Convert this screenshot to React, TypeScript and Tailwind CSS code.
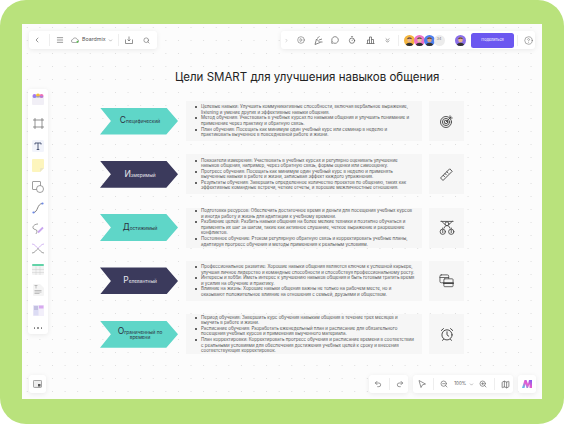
import React from "react";
import { ChevronLeft, ChevronRight, ChevronDown, ChevronsDown, Menu, Search, PlayCircle, MessageCircle, Timer, Undo2, Redo2, ZoomIn, ZoomOut, Map, HelpCircle } from "lucide-react";

const rows = [
  { first: "С", rest: "пецифический", dark: false, icon: "target", items: [
    "Целевые навыки: Улучшить коммуникативные способности, включая вербальное выражение, listening и умение других и эффективные навыки общения.",
    "Метод обучения: Участвовать в учебных курсах по навыкам общения и улучшить понимание и применение через практику и обратную связь.",
    "План обучения: Посещать как минимум один учебный курс или семинар в неделю и практиковать выученное в повседневной работе и жизни." ] },
  { first: "И", rest: "змеримый", dark: true, icon: "ruler", items: [
    "Показатели измерения: Участвовать в учебных курсах и регулярно оценивать улучшение навыков общения, например, через обратную связь, формы оценки или самооценку.",
    "Прогресс обучения: Посещать как минимум один учебный курс в неделю и применять выученные навыки в работе и жизни, записывая эффект каждого упражнения.",
    "Результаты обучения: Завершить определенное количество проектов по общению, таких как эффективные командные встречи, четкие отчеты, и хорошие межличностные отношения." ] },
  { first: "Д", rest: "остижимый", dark: false, icon: "team", items: [
    "Подготовка ресурсов: Обеспечить достаточное время и деньги для посещения учебных курсов и иногда работу и жизнь для адаптации к учебному времени.",
    "Разбиение целей: Разбить навыки общения на более мелкие техники и поэтапно обучаться и применять их шаг за шагом, такие как активное слушание, четкое выражение и разрешение конфликтов.",
    "Постоянное обучение: Ртоком регулярную обратную связь и корректировать учебные планы, адаптируя прогресс обучения и методы применения к реальным условиям." ] },
  { first: "Р", rest: "елевантный", dark: true, icon: "cards", items: [
    "Профессиональное развитие: Хорошие навыки общения являются ключом к успешной карьере, улучшая личное лидерство и командные способности и способствуя профессиональному росту.",
    "Интересы и хобби: Иметь интерес к улучшению навыков общения и быть готовым тратить время и усилия на обучение и практику.",
    "Влияние на жизнь: Хорошие навыки общения важны не только на рабочем месте, но и оказывают положительное влияние на отношения с семьей, друзьями и обществом." ] },
  { first: "О", rest: "граниченный по времени", dark: false, icon: "clock", items: [
    "Период обучения: Завершить курс обучения навыкам общения в течение трех месяцев и выучить в работе и жизни.",
    "Расписание обучения: Разработать еженедельный план и расписание для обязательного посещения учебных курсов и применения выученного материала.",
    "План корректировки: Корректировать прогресс обучения и расписание времени в соответствии с реальными условиями для обеспечения достижения учебных целей к сроку и внесения соответствующих корректировок." ] },
];

function RowIcon({ kind }: { kind: string }) {
  const c = { fill: "none", stroke: "#444", strokeWidth: 0.9, strokeLinecap: "round" as const, strokeLinejoin: "round" as const };
  if (kind === "target") return (
    <svg width="13" height="13" viewBox="0 0 13 13" {...c}>
      <circle cx="6" cy="7" r="5.500" /><circle cx="6" cy="7" r="3.600" /><circle cx="6" cy="7" r="1.800" /><path d="M6 7 11 2M10 .8V3h2.200" />
    </svg>);
  if (kind === "ruler") return (
    <svg width="13" height="13" viewBox="0 0 13 13" {...c}>
      <path d="M.8 9.700 9.700.8 12.200 3.300 3.300 12.200Z" /><path d="M3.200 7.300 4.500 8.600M5 5.500 6.300 6.800M6.800 3.700 8.100 5" />
    </svg>);
  if (kind === "team") return (
    <svg width="16" height="16" viewBox="0 0 17 17" {...c}>
      <circle cx="8.500" cy="4" r="2" /><path d="M2 1.500h13M3 1.500l3.500 3.500M14 1.500l-3.500 3.500M5.500 8.500c.5-2 1.500-2.500 3-2.500s2.500.5 3 2.500" />
      <circle cx="4" cy="12.500" r="2.800" /><circle cx="13" cy="12.500" r="2.800" /><path d="M4 8.500v1.200M13 8.500v1.200M4 11v2.500M13 11v2.500" />
    </svg>);
  if (kind === "cards") return (
    <svg width="15" height="14" viewBox="0 0 17 16" {...c}>
      <rect x="1" y="1" width="10" height="9" rx="1.500" /><path d="M1 4h10" /><rect x="5.500" y="5.500" width="10.500" height="9" rx="1" fill="#f6f6f6" /><path d="M5.500 10.500h10.500" strokeWidth={2} />
    </svg>);
  return (
    <svg width="14" height="14" viewBox="0 0 16 16" {...c} strokeWidth={1.100}>
      <circle cx="8" cy="9" r="5.800" /><path d="M8 5.500V9l2 1.500M1.500 4 4 1.800M14.500 4 12 1.800M4 14l-1 1.300M12 14l1 1.300" />
    </svg>);
}

function Avatar({ bg, skin = "#e8b48f", hair = "#3a2a22" }: { bg: string; skin?: string; hair?: string }) {
  return (
    <svg width="11" height="11" viewBox="0 0 11 11" className="rounded-full shrink-0">
      <rect width="11" height="11" fill={bg} />
      <ellipse cx="5.500" cy="4.800" rx="2.200" ry="2.700" fill={skin} />
      <path d="M3.200 4.200C3.200 2 7.800 2 7.800 4.200 6.500 3.200 4.500 3.200 3.200 4.200Z" fill={hair} />
      <path d="M1.500 11c.4-2.500 2-3.300 4-3.300s3.600.8 4 3.300Z" fill="#333" />
    </svg>
  );
}

function Divider({ h = "h-3" }: { h?: string }) {
  return <div className={`w-px ${h} bg-[#eeeeee] shrink-0`} />;
}

function LeftTools() {
  return (
    <div className="absolute left-[6px] top-[65px] w-[20px] h-[245px] bg-white rounded-[3px] shadow-[0_1px_5px_rgba(0,0,0,0.08)] flex flex-col items-center">
      <svg width="12" height="12" viewBox="0 0 12 12" className="mt-[4px]">
        <rect x="0" y="3" width="12" height="9" rx="1" fill="#f1eff6" />
        <circle cx="2.500" cy="3" r="2" fill="#a977ea" /><circle cx="6" cy="2.500" r="2" fill="#f3bf3a" /><circle cx="9.500" cy="3" r="2" fill="#ec6fb7" />
        <rect x="1" y="3" width="10" height="1.500" fill="#7f8ff0" opacity=".6" />
      </svg>
      <svg width="11" height="11" viewBox="0 0 11 11" fill="none" stroke="#666" strokeWidth=".7" className="mt-[13px]">
        <path d="M2 0v11M9 0v11M0 2h11M0 9h11" />
      </svg>
      <svg width="12" height="12" viewBox="0 0 12 12" className="mt-[11px]">
        <rect width="12" height="12" rx="1.500" fill="#f2f4fb" />
        <path d="M3 3h6v1.500M3 3v1.500M6 3v6.500M4.700 9.500h2.600" stroke="#3d4a6b" strokeWidth=".9" fill="none" />
      </svg>
      <svg width="12" height="13" viewBox="0 0 12 13" className="mt-[7px]">
        <path d="M0 1a1 1 0 0 1 1-1h10a1 1 0 0 1 1 1v8l-4 4H1a1 1 0 0 1-1-1Z" fill="#fdf5bd" />
        <path d="M12 9H9a1 1 0 0 0-1 1v3Z" fill="#ece7c4" />
      </svg>
      <svg width="12" height="12" viewBox="0 0 12 12" fill="none" stroke="#777" strokeWidth=".7" className="mt-[9px]">
        <rect x=".5" y=".5" width="8" height="8" rx=".5" /><circle cx="8" cy="8" r="3.500" fill="#fff" />
      </svg>
      <svg width="12" height="12" viewBox="0 0 12 12" fill="none" className="mt-[9px]">
        <path d="M1.500 10.500C6 10.500 5 1.500 10.500 1.500" stroke="#666" strokeWidth=".8" />
        <circle cx="1.500" cy="10.500" r="1.100" fill="#6b88e8" /><circle cx="10.500" cy="1.500" r="1.100" fill="#6b88e8" />
      </svg>
      <svg width="12" height="12" viewBox="0 0 12 12" fill="none" className="mt-[9px]">
        <path d="M6 1C3 1 .5 3 1 5c.5 2 4 1 4 3s-1 2.500-1 3" stroke="#777" strokeWidth=".7" />
        <path d="M6 9.500 11 4.500" stroke="#c9a6ef" strokeWidth="1.800" />
      </svg>
      <svg width="12" height="11" viewBox="0 0 12 11" fill="none" className="mt-[8px]">
        <path d="M0 1c3 0 4 3 6 4.500M12 1C9 1 8 4 6 5.500" stroke="#c9a6ef" strokeWidth=".8" />
        <path d="M0 10c3 0 4-3 6-4.500M12 10c-3 0-4-3-6-4.500" stroke="#888" strokeWidth=".8" />
      </svg>
      <svg width="12" height="11" viewBox="0 0 12 11" className="mt-[10px]">
        <rect width="12" height="11" rx="1" fill="#f3f3f3" />
        <rect width="12" height="2" rx="1" fill="#62d3a8" />
        <path d="M4 2.500V11M8 2.500V11M0 5.500h12M0 8.500h12" stroke="#cfcfcf" strokeWidth=".5" />
      </svg>
      <svg width="11" height="12" viewBox="0 0 11 12" className="mt-[9px]">
        <path d="M0 1a1 1 0 0 1 1-1h6l4 4v7a1 1 0 0 1-1 1H1a1 1 0 0 1-1-1Z" fill="#f4f4f4" />
        <path d="M1.500 1.500h3M3 1.500v3M1.500 6.500h7M1.500 8h7M1.500 9.500h5" stroke="#888" strokeWidth=".5" />
      </svg>
      <svg width="11" height="11" viewBox="0 0 11 11" className="mt-[9px]">
        <rect width="11" height="11" fill="#f2effa" />
        <rect x=".5" y=".5" width="5" height="10" fill="#dcdcf4" />
        <rect x="6" y=".5" width="4.500" height="3" fill="#d8a9ef" />
        <path d="M1 2h4M1 4h4" stroke="#7a6fa8" strokeWidth=".5" />
      </svg>
      <div className="flex gap-[2px] mt-[11px]">
        <div className="w-[1.500px] h-[1.500px] rounded-full bg-[#777]" />
        <div className="w-[1.500px] h-[1.500px] rounded-full bg-[#777]" />
        <div className="w-[1.500px] h-[1.500px] rounded-full bg-[#777]" />
      </div>
    </div>
  );
}

export default function App() {
  return (
    <div className="w-[564px] h-[424px] bg-white overflow-hidden [font-family:Inter,'Liberation_Sans',sans-serif]">
      <div className="w-full h-full bg-[#b9e27c] rounded-[26px] pt-[24px] pl-[22px]">
        <div className="relative w-[520px] h-[375px] bg-[#fcfcfc] overflow-hidden bg-[radial-gradient(circle,#dddddd_0.55px,transparent_0.8px)] bg-[size:12.6px_13px] bg-[position:-1px_-3px]">
          {/* board */}
          <div className="pt-[45px] pl-[78px] w-[470px]">
            <h1 className="text-[11.5px] leading-[16px] font-normal text-[#222] ml-[75px] whitespace-nowrap">Цели SMART для улучшения навыков общения</h1>
            <div className="mt-[16px] flex flex-col gap-[13.300px]">
              {rows.map((r, i) => (
                <div key={i} className="flex h-[40px] items-center">
                  <div className={`w-[78px] h-[27px] shrink-0 flex items-center justify-center text-center pl-[10px] pr-[8px] leading-[5.500px] [clip-path:polygon(0_0,85%_0,100%_50%,85%_100%,0_100%,14%_50%)] ${r.dark ? "bg-[#3b3a5c] text-[#e8e8ee]" : "bg-[#5fd6c8] text-[#2c3040]"}`}>
                    <span className="text-[4.800px]"><span className="text-[8.500px] leading-[6px]">{r.first}</span>{r.rest}</span>
                  </div>
                  <div className="ml-[8px] w-[236px] h-[40px] shrink-0 bg-[#f6f6f6] flex items-center pl-[9px] pr-[7px]">
                    <ul className="flex flex-col text-[4.450px] leading-[5.600px] text-[#555]">
                      {r.items.map((t, j) => (
                        <li key={j} className="flex">
                          <div className="w-[2px] h-[2px] mt-[2px] mr-[4px] rounded-full bg-[#333] shrink-0" />
                          <span>{t}</span>
                        </li>
                      ))}
                    </ul>
                  </div>
                  <div className="ml-[7px] w-[35px] h-[40px] shrink-0 bg-[#f6f6f6] flex items-center justify-center">
                    <RowIcon kind={r.icon} />
                  </div>
                </div>
              ))}
            </div>
          </div>

          {/* top left bar */}
          <div className="absolute left-[6.500px] top-[7px] w-[128px] h-[18px] bg-white rounded-[3px] shadow-[0_1px_5px_rgba(0,0,0,0.08)] flex items-center pl-[4.500px] text-[#666]">
            <ChevronLeft size={8} className="shrink-0" />
            <div className="ml-[7.500px]"><Divider /></div>
            <Menu size={8} className="ml-[6px] shrink-0" />
            <svg width="8" height="6" viewBox="0 0 8 6" fill="none" className="ml-[7.500px] shrink-0"><path d="M2 5.500a1.500 1.500 0 0 1-.2-3 2.300 2.300 0 0 1 4.400 0A1.500 1.500 0 0 1 6 5.500Z" stroke="#777" strokeWidth=".6" /><circle cx="6.500" cy="4.800" r="1" fill="#58c24f" /></svg>
            <span className="ml-[3px] text-[5.300px] text-[#555] whitespace-nowrap">Boardmix</span>
            <ChevronDown size={5} className="ml-[2.500px] shrink-0" />
            <div className="ml-[5px]"><Divider /></div>
            <svg width="8" height="8" viewBox="0 0 8 8" fill="none" stroke="#666" strokeWidth=".7" className="ml-[5.500px] shrink-0"><path d="M.5 3.500v4h7v-4M4 .5v4.500M2.500 3.500 4 5l1.500-1.500" /></svg>
            <Search size={7} className="ml-[10px] shrink-0" />
          </div>

          {/* top right bar */}
          <div className="absolute left-[259px] top-[7px] w-[254px] h-[18px] bg-white rounded-[3px] shadow-[0_1px_5px_rgba(0,0,0,0.08)] flex items-center pl-[3px] text-[#555]">
            <ChevronRight size={5} className="shrink-0 text-[#999]" />
            <PlayCircle size={8} strokeWidth={1.500} className="ml-[8px] shrink-0" />
            <svg width="9" height="9" viewBox="0 0 9 9" fill="none" stroke="#555" strokeWidth=".7" className="ml-[8.500px] shrink-0"><path d="M1 8.500 2.500 3 6 6.500ZM3 2.500C4 1.500 5 1 5.500.5M5 4l3-1M6 6h2.500" /></svg>
            <MessageCircle size={8} className="ml-[8.500px] shrink-0" />
            <Timer size={8} className="ml-[9px] shrink-0" />
            <svg width="9" height="8" viewBox="0 0 9 8" fill="none" stroke="#555" strokeWidth=".7" className="ml-[9.500px] shrink-0"><path d="M.5 7.500h8M1.500 7.500V4h2M3.500 7.500V1h2v6.500M5.500 3.500h2v4" /></svg>
            <ChevronsDown size={7} className="ml-[9px] shrink-0" />
            <div className="ml-[7.500px]"><Divider h="h-[11px]" /></div>
            <div className="ml-[4.500px] flex">
              <Avatar bg="#f3b53e" />
              <div className="-ml-[1px]"><Avatar bg="#ee72c6" skin="#e9c0a0" /></div>
              <div className="-ml-[1px]"><Avatar bg="#4d7fee" skin="#dca27d" /></div>
              <div className="-ml-[1px] w-[11px] h-[11px] rounded-full bg-[#ececec] text-[#777] text-[3.500px] flex items-center justify-center">34</div>
            </div>
            <div className="ml-[10px]"><Avatar bg="#8a6ee8" /></div>
            <div className="ml-[5.500px] w-[43px] h-[15px] rounded-[2.500px] bg-[#6b57f0] text-white text-[3.800px] flex items-center justify-center">Поделиться</div>
            <div className="ml-[3px]"><Divider h="h-[11px]" /></div>
            <HelpCircle size={9} strokeWidth={1.300} className="ml-[5.500px] shrink-0" />
          </div>

          <LeftTools />

          {/* bottom left */}
          <div className="absolute left-[7px] top-[351px] w-[17px] h-[18px] bg-white rounded-[3px] shadow-[0_1px_5px_rgba(0,0,0,0.08)] flex items-center justify-center">
            <svg width="9" height="8" viewBox="0 0 9 8"><rect x=".4" y=".4" width="8.200" height="7" rx="1" fill="#eee" stroke="#777" strokeWidth=".7" /><rect x="5" y="4" width="2.500" height="2.500" fill="#555" /></svg>
          </div>

          {/* bottom right bars */}
          <div className="absolute left-[347px] top-[351px] w-[39px] h-[18px] bg-white rounded-[3px] shadow-[0_1px_5px_rgba(0,0,0,0.08)] flex items-center pl-[5px] text-[#666]">
            <Undo2 size={8} className="shrink-0" />
            <div className="ml-[6.700px]"><Divider /></div>
            <Redo2 size={8} className="ml-[6.300px] shrink-0" />
          </div>
          <div className="absolute left-[391px] top-[351px] w-[100px] h-[18px] bg-white rounded-[3px] shadow-[0_1px_5px_rgba(0,0,0,0.08)] flex items-center pl-[5px] text-[#666]">
            <svg width="8" height="8" viewBox="0 0 8 8" fill="none" stroke="#666" strokeWidth=".7" className="shrink-0"><path d="M1 .5 7.500 4 4.500 4.800 3 7.500Z" /></svg>
            <div className="ml-[7px]"><Divider /></div>
            <ZoomOut size={8} className="ml-[5.600px] shrink-0" />
            <span className="ml-[6.700px] text-[4.500px] text-[#555]">100%</span>
            <ChevronDown size={5} className="ml-[3px] shrink-0" />
            <ZoomIn size={8} className="ml-[4.300px] shrink-0" />
            <div className="ml-[7.400px]"><Divider /></div>
            <Map size={9} className="ml-[5.800px] shrink-0" />
          </div>
          <div className="absolute left-[496px] top-[351px] w-[18px] h-[18px] bg-white rounded-[3px] shadow-[0_1px_5px_rgba(0,0,0,0.08)] flex items-center justify-center">
            <svg width="10" height="8" viewBox="0 0 10 8">
              <defs><linearGradient id="mg" x1="0" y1="1" x2="1" y2="0"><stop offset="0" stopColor="#3fd0ee" /><stop offset=".5" stopColor="#e85bd0" /><stop offset="1" stopColor="#7a5cf0" /></linearGradient></defs>
              <path d="M0 8 2.500 0h2L6 4l1-4h3v8H7.500V4L6 8H4.500L3.500 4 2.500 8Z" fill="url(#mg)" />
            </svg>
          </div>
        </div>
      </div>
    </div>
  );
}
